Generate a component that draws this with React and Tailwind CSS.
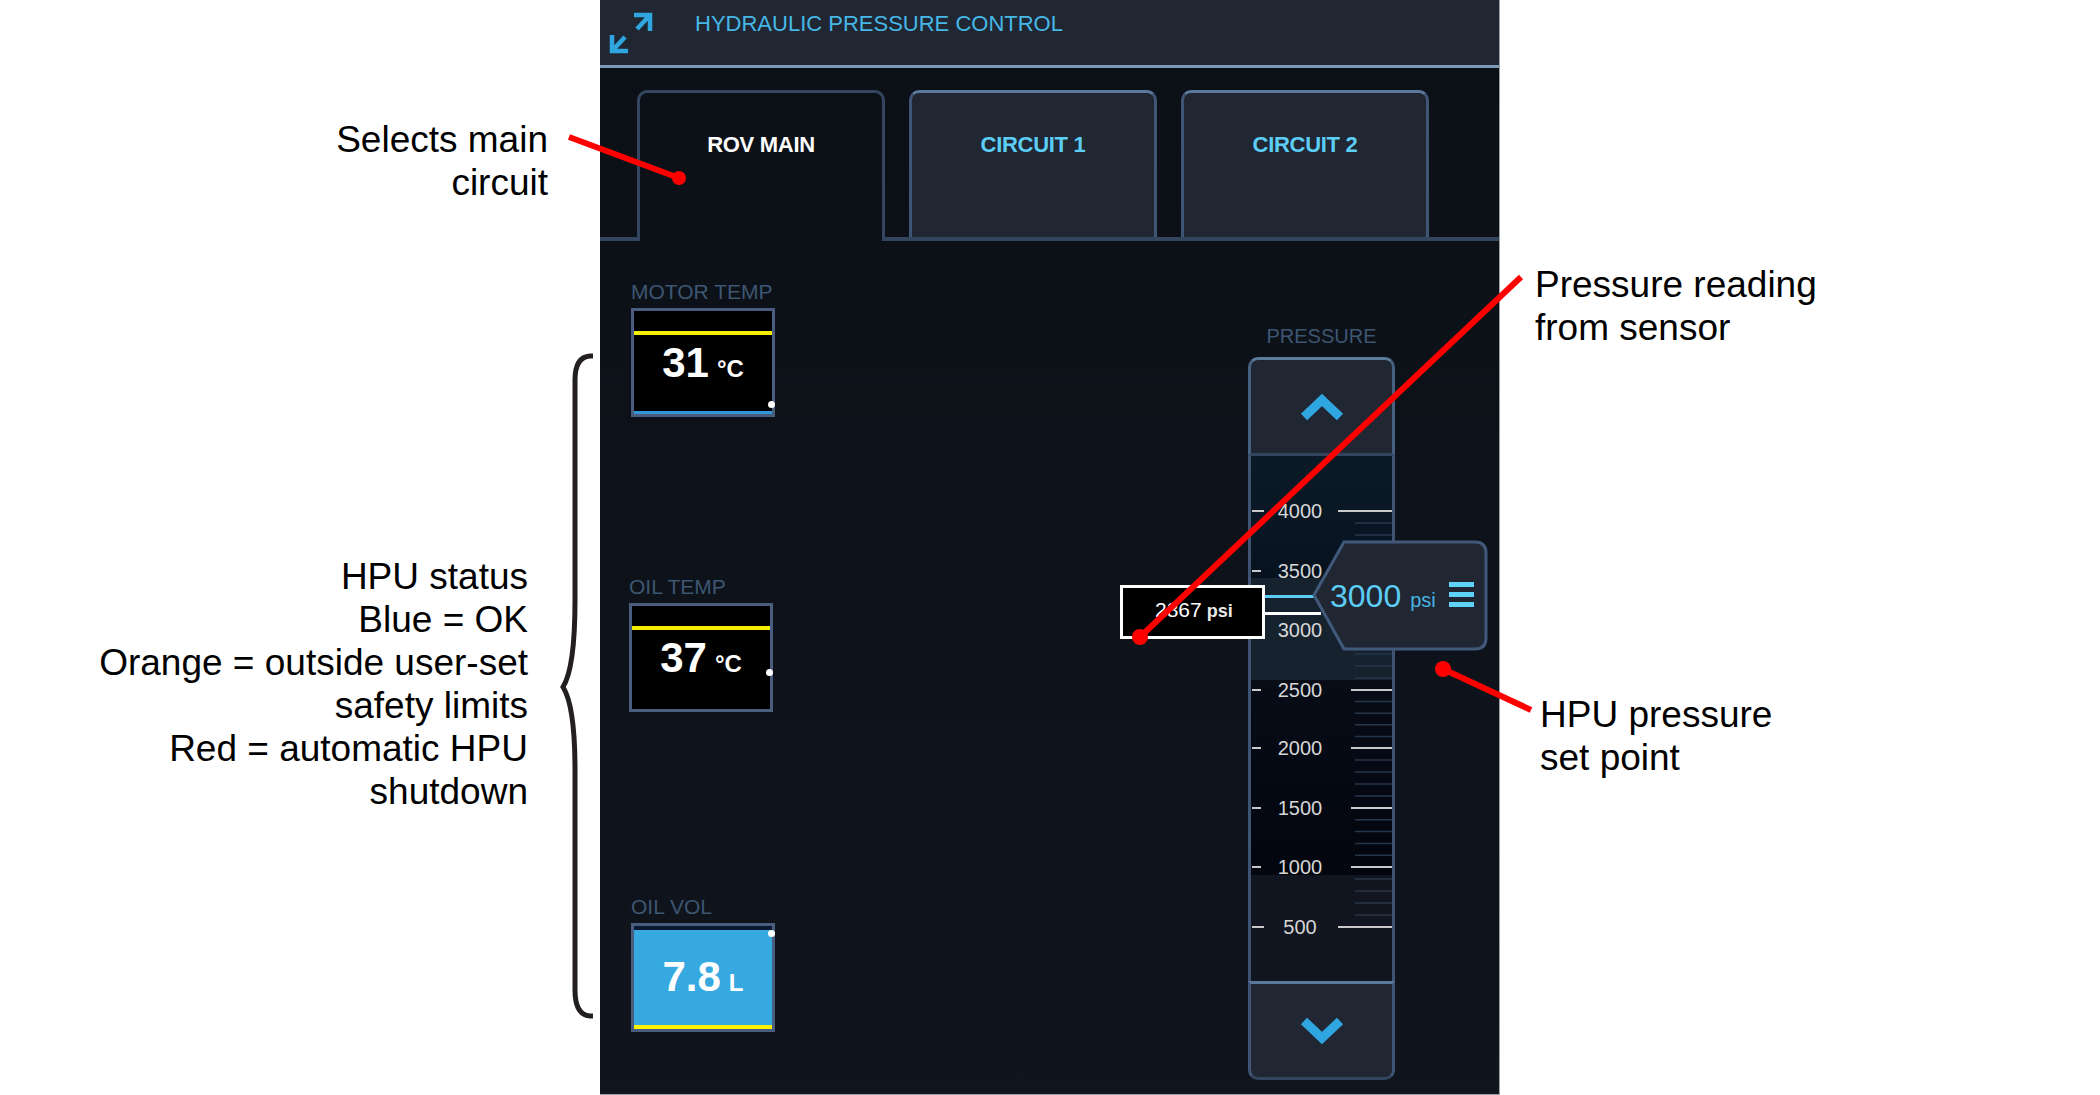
const sans = { fontFamily: '"Liberation Sans", Arial, sans-serif' };

function Gauge({ label, value, unit, fill, className, bottomBar, dotClass }) {
  return (
    <div className={className}>
      <div className="text-[21px] leading-6 text-[#3d5672] mb-1 whitespace-nowrap">{label}</div>
      <div className={`relative w-[144px] h-[109px] border-[3px] border-[#4a5d7e] flex flex-col ${fill ? "bg-[#36a9e1]" : "bg-black"}`}>
        {fill ? (
          <div className="h-[4px] bg-[#0b1a33] shrink-0" />
        ) : (
          <div className="mt-[20px] h-[4px] bg-[#f6ee00] shrink-0" />
        )}
        <div className={`flex-1 flex items-baseline justify-center gap-[8px] font-bold text-white ${fill ? "pt-[22px]" : "pt-[3px]"}`}>
          <span className="text-[42px] leading-[50px]">{value}</span>
          <span className="text-[24px] leading-none">{unit}</span>
        </div>
        {bottomBar && <div className={`h-[3px] shrink-0 ${bottomBar}`} />}
        <div className={`absolute w-[7px] h-[7px] rounded-full bg-white ${dotClass}`} />
      </div>
    </div>
  );
}

function Tab({ label, active }) {
  return (
    <div
      className={
        active
          ? "relative w-[248px] h-[151px] -mb-[4px] rounded-t-[10px] border-[3px] border-b-0 border-[#34465f] bg-[#0c1118] flex justify-center pt-[40px]"
          : "w-[248px] h-[147px] rounded-t-[10px] border-[3px] border-b-0 border-t-[#5b7a9c] border-x-[#3f5575] bg-[#202733] flex justify-center pt-[40px]"
      }
    >
      <span className={`text-[22px] leading-6 font-bold tracking-[-0.3px] ${active ? "text-white" : "text-[#5ccdf4]"}`}>{label}</span>
    </div>
  );
}

const majors = [
  [4000, 511, 1264, 1338],
  [3500, 571, 1261, 1351],
  [3000, 630, 1261, 1351],
  [2500, 690, 1261, 1351],
  [2000, 748, 1261, 1351],
  [1500, 808, 1261, 1351],
  [1000, 867, 1261, 1351],
  [500, 927, 1264, 1338],
];

function Ruler() {
  return (
    <svg className="absolute left-0 top-0" width="141" height="525" viewBox="1251 456 141 525">
      {majors.slice(0, -1).map(([v, y], i) =>
        [1, 2, 3, 4].map((k) => {
          const yy = y + ((majors[i + 1][1] - y) * k) / 5;
          return <line key={v + "-" + k} x1="1355" x2="1392" y1={yy} y2={yy} stroke="#26364a" strokeWidth="1.5" />;
        })
      )}
      {majors.map(([v, y, l, r]) => (
        <g key={v}>
          <line x1="1252" x2={l} y1={y} y2={y} stroke="#c9c9c9" strokeWidth="2" />
          <line x1={r} x2="1392" y1={y} y2={y} stroke="#c9c9c9" strokeWidth="2" />
          <text x="1300" y={y + 7} textAnchor="middle" fontSize="20" fill="#d6d6d6" style={sans}>{v}</text>
        </g>
      ))}
    </svg>
  );
}

function Pressure() {
  return (
    <div className="relative w-[147px] mt-[83px]">
      <div className="text-[20px] leading-6 text-[#3d5672] text-center mb-[9px]">PRESSURE</div>
      <div className="h-[99px] rounded-t-[10px] border-[3px] border-t-[#5b7a9c] border-x-[#46607f] border-b-[#34465f] bg-[#202733] flex items-center justify-center">
        <svg width="44" height="30" viewBox="0 0 44 30">
          <polyline points="4,25 22,8 40,25" fill="none" stroke="#2fa6e0" strokeWidth="9" />
        </svg>
      </div>
      <div className="relative h-[525px] border-x-[3px] border-[#3f5473] flex flex-col">
        <div className="h-[122px] bg-gradient-to-b from-[#0c1a27] to-[#07121f]" />
        <div className="h-[102px] bg-[#16232f]" />
        <div className="h-[195px] bg-gradient-to-b from-[#070c17] to-[#03060e]" />
        <div className="flex-1 bg-[#10151f]" />
        <Ruler />
      </div>
      <div className="h-[99px] rounded-b-[10px] border-[3px] border-t-[#5b7a9c] border-x-[#3f5575] border-b-[#34465f] bg-[#202733] flex items-center justify-center">
        <svg width="44" height="30" viewBox="0 0 44 30">
          <polyline points="4,5 22,22 40,5" fill="none" stroke="#2fa6e0" strokeWidth="9" />
        </svg>
      </div>

      {/* set-point line and live reading, lying over the scale */}
      <div className="absolute left-[14px] top-[271px] w-[60px] h-[3px] bg-[#5ccdf4]" />
      <div className="absolute left-[17px] top-[288px] w-[56px] h-[3px] bg-white" />
      <div className="absolute left-[-128px] top-[261px] w-[145px] h-[54px] border-[3px] border-white bg-black flex items-baseline text-white pl-[32px] pt-[10px]">
        <span className="text-[21px] leading-6">2867</span>
        <span className="text-[18px] leading-6 font-bold ml-[5px] text-[#e8e8e8]">psi</span>
      </div>

      {/* set-point thumb */}
      <div className="absolute left-[64px] top-[216px] w-[176px] h-[111px]">
        <svg className="absolute inset-0" width="176" height="111" viewBox="0 0 176 111">
          <path d="M2 55 L32 2 H163 Q174 2 174 13 V98 Q174 109 163 109 H32 Z" fill="#202733" stroke="#41597a" strokeWidth="3" />
        </svg>
        <div className="absolute inset-0 flex items-center pl-[18px] text-[#5ccdf4]">
          <span className="text-[32px] leading-9">3000</span>
          <span className="text-[20px] leading-6 ml-[9px] mt-[8px] text-[#48b5e2]">psi</span>
          <div className="ml-[13px] w-[25px] flex flex-col gap-[5px] mt-[-2px]">
            <div className="h-[5px] bg-[#5fd3f7]" />
            <div className="h-[5px] bg-[#5fd3f7]" />
            <div className="h-[5px] bg-[#5fd3f7]" />
          </div>
        </div>
      </div>
    </div>
  );
}

function Panel() {
  return (
    <div className="ml-[600px] w-[900px] h-[1095px] flex flex-col bg-gradient-to-b from-[#0b1017] to-[#10141c] border-r border-b border-[#9aa0a6]">
      <header className="h-[68px] shrink-0 bg-[#202733] border-b-[3px] border-[#7d9ab5] flex items-center pb-[17px]">
        <svg className="ml-[8px] mt-[17px]" width="46" height="44" viewBox="0 0 46 44">
          <path d="M26 4 H42 V20 M42 4 L29 18" fill="none" stroke="#2fa6e0" strokeWidth="4.5" />
          <path d="M4 24 V40 H20 M4 40 L17 26" fill="none" stroke="#2fa6e0" strokeWidth="4.5" />
        </svg>
        <span className="ml-[41px] text-[22px] leading-6 text-[#46b7e6]">HYDRAULIC PRESSURE CONTROL</span>
      </header>

      <div className="shrink-0 h-[173px] pt-[22px] pl-[37px] flex gap-[24px] items-start border-b-[4px] border-[#34465f]">
        <Tab label="ROV MAIN" active />
        <Tab label="CIRCUIT 1" />
        <Tab label="CIRCUIT 2" />
      </div>

      <div className="flex-1 flex justify-between pl-[31px] pr-[104px]">
        <div className="flex flex-col">
          <Gauge className="mt-[39px]" label="MOTOR TEMP" value="31" unit="°C" bottomBar="mt-auto bg-[#2f97d8]" dotClass="right-[-3px] bottom-[6px]" />
          <Gauge className="mt-[158px] -ml-[2px]" label="OIL TEMP" value="37" unit="°C" dotClass="right-[-3px] top-[63px]" />
          <Gauge className="mt-[183px]" label="OIL VOL" value="7.8" unit="L" fill bottomBar="mt-auto bg-[#fdf200] h-[4px]" dotClass="right-[-3px] top-[4px]" />
        </div>
        <Pressure />
      </div>
    </div>
  );
}

function Note({ className, lines }) {
  return (
    <div className={`absolute text-[37px] leading-[43px] text-black whitespace-nowrap ${className}`}>
      {lines.map((l) => (
        <div key={l}>{l}</div>
      ))}
    </div>
  );
}

export default function App() {
  return (
    <div className="relative w-[2100px] h-[1095px] bg-white overflow-hidden" style={sans}>
      <Panel />

      <svg className="absolute inset-0 pointer-events-none" width="2100" height="1095" viewBox="0 0 2100 1095">
        <path d="M593 356 H590 Q575 357 575 380 V600 Q575 668 563 687 Q575 706 575 770 V990 Q575 1015 590 1016 H593" fill="none" stroke="#231f20" strokeWidth="5" />
        <g stroke="#ff0000" strokeWidth="6" fill="#ff0000">
          <line x1="569" y1="137" x2="679" y2="178" />
          <line x1="1521" y1="277" x2="1140" y2="637" />
          <line x1="1531" y1="710" x2="1443" y2="669" />
        </g>
        <g fill="#ff0000">
          <circle cx="679" cy="178" r="7" />
          <circle cx="1140" cy="637" r="8" />
          <circle cx="1443" cy="669" r="8" />
        </g>
      </svg>

      <Note className="left-[250px] top-[118px] w-[298px] text-right" lines={["Selects main", "circuit"]} />
      <Note className="left-[50px] top-[555px] w-[478px] text-right" lines={["HPU status", "Blue = OK", "Orange = outside user-set", "safety limits", "Red = automatic HPU", "shutdown"]} />
      <Note className="left-[1535px] top-[263px]" lines={["Pressure reading", "from sensor"]} />
      <Note className="left-[1540px] top-[693px]" lines={["HPU pressure", "set point"]} />
    </div>
  );
}
